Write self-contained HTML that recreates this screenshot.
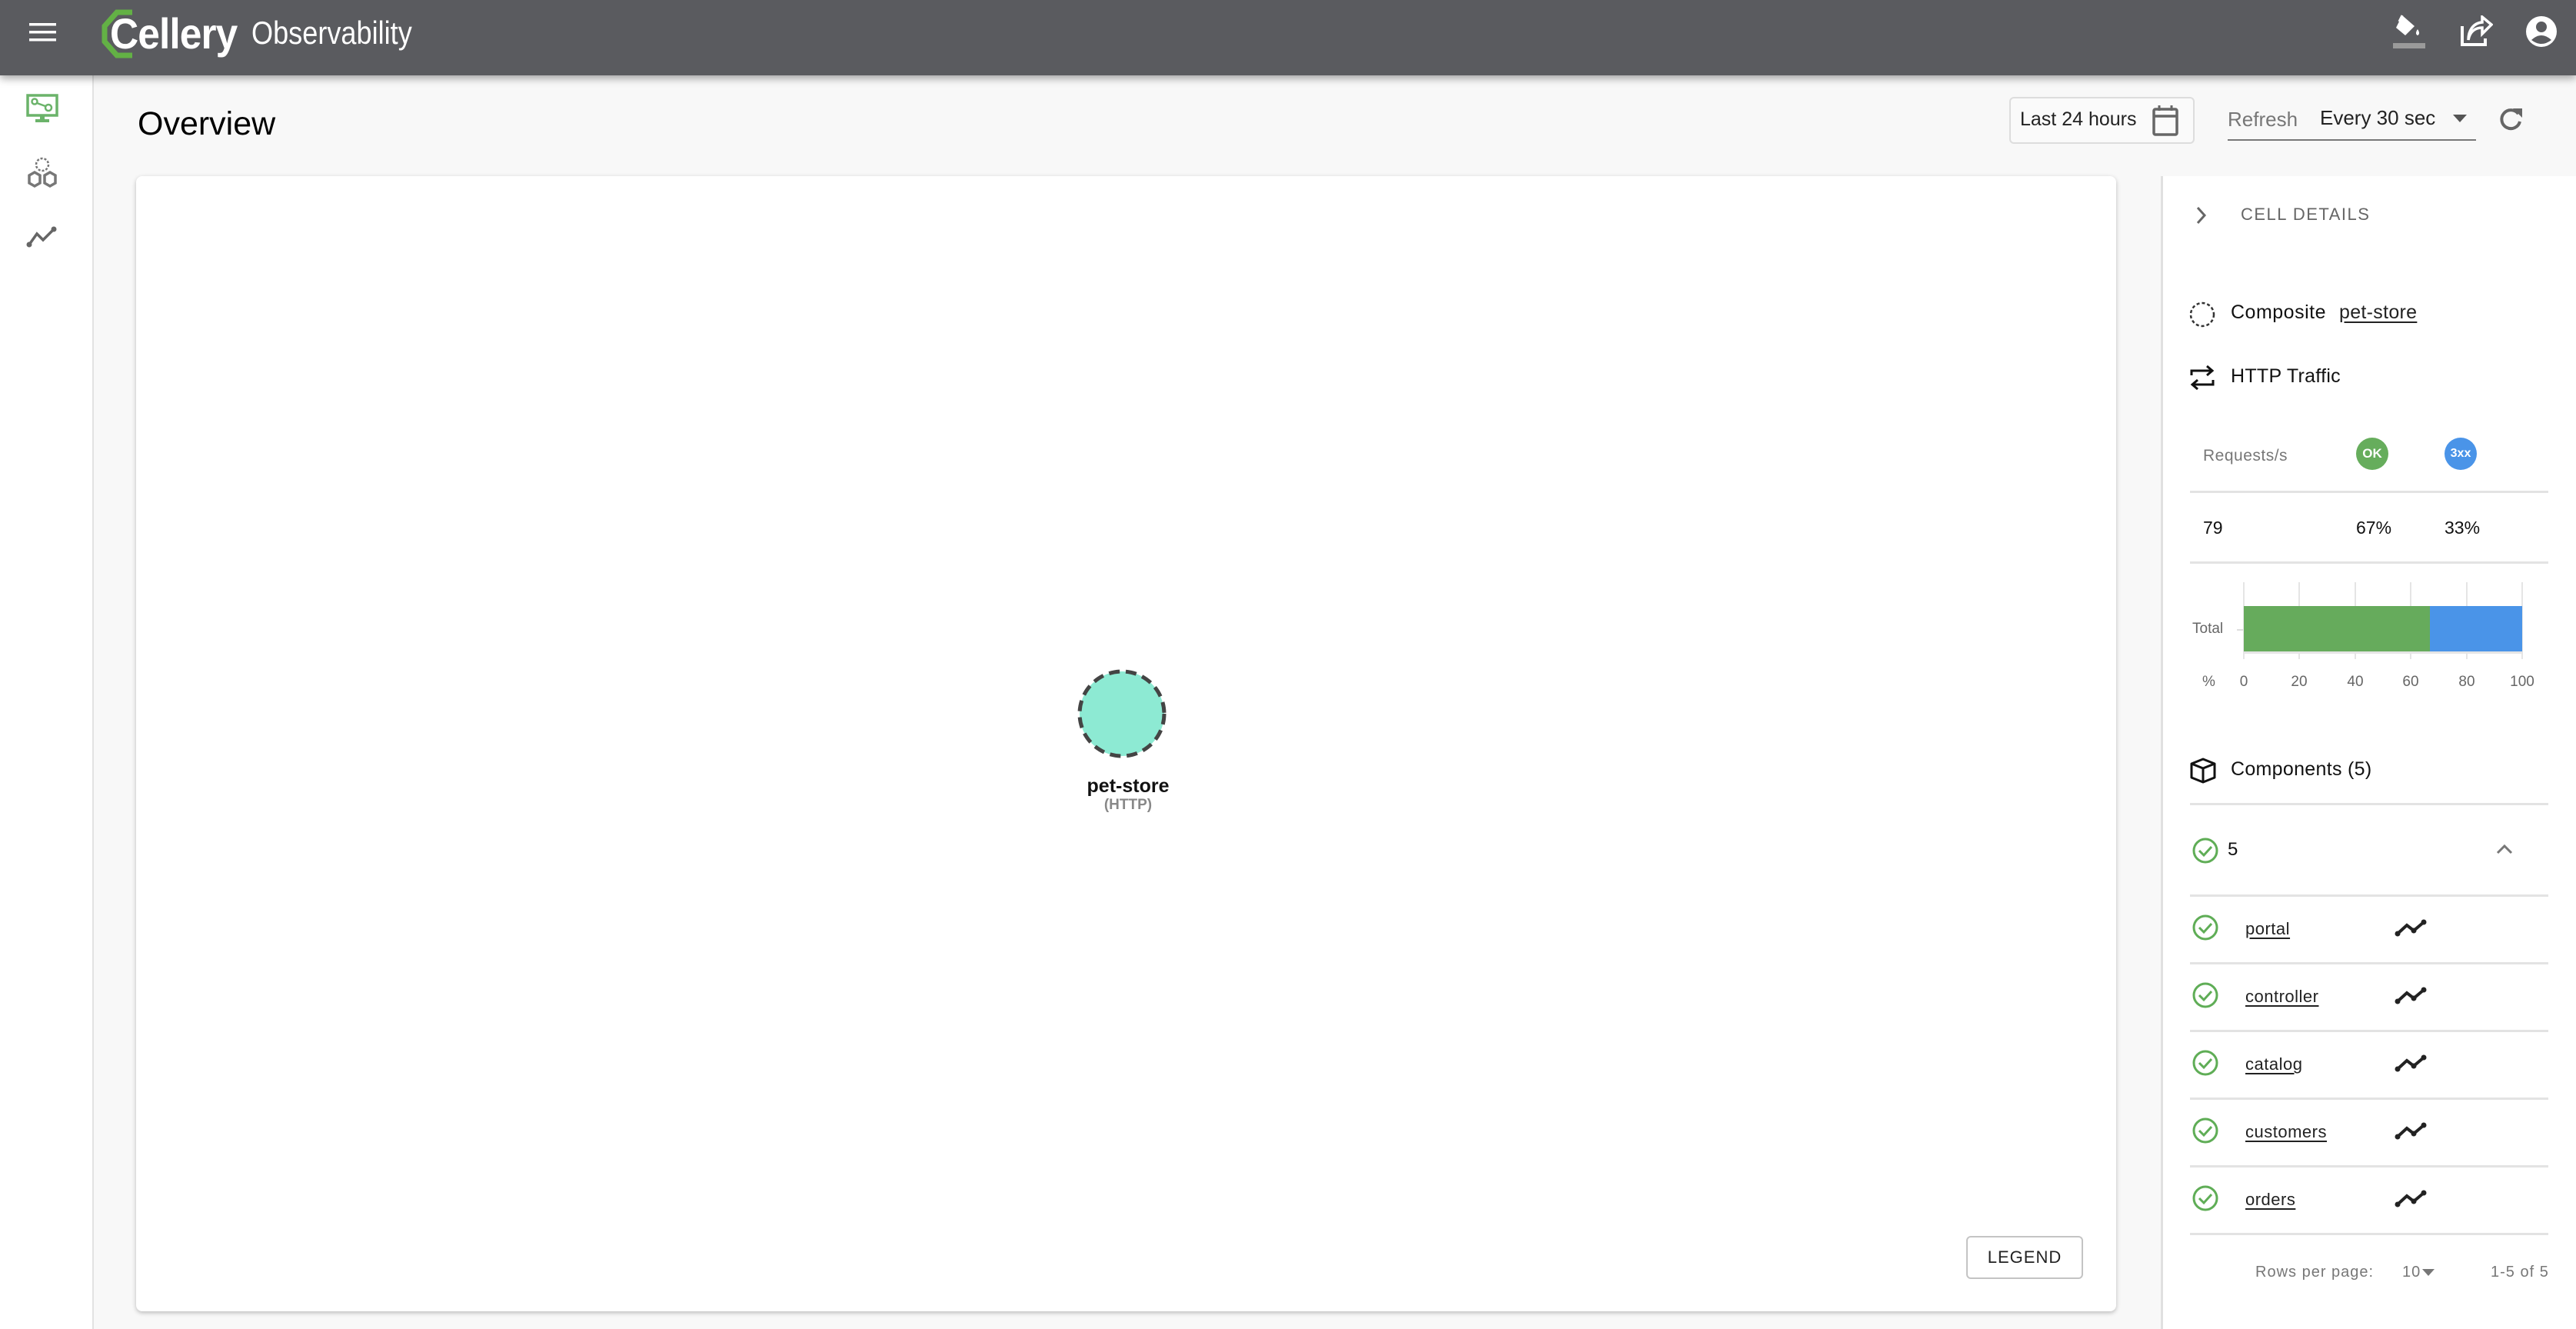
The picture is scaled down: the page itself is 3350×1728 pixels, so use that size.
<!DOCTYPE html>
<html><head><meta charset="utf-8"><style>
*{margin:0;padding:0;box-sizing:border-box}
body{width:3350px;height:1728px;overflow:hidden;background:#f8f8f8;font-family:"Liberation Sans",sans-serif;position:relative;color:#111}
.a{position:absolute}
.hdr{left:0;top:0;width:3350px;height:98px;background:#5a5b5f;box-shadow:0 4px 10px rgba(0,0,0,.35);z-index:5}
.side{left:0;top:98px;width:122px;height:1630px;background:#fff;border-right:2px solid #e2e2e2}
.card{left:177px;top:229px;width:2575px;height:1476px;background:#fff;border-radius:8px;box-shadow:0 2px 6px rgba(0,0,0,.25)}
.panel{left:2810px;top:229px;width:540px;height:1499px;background:#fff;border-left:3px solid #e0e0e0}
.t{white-space:nowrap;line-height:1}
.ln{height:3px;background:#e3e3e3;left:2848px;width:466px}
.u{text-decoration:underline;text-underline-offset:4px}
.g{width:2px;height:100px;background:#e5e5e5;top:757px}
.x{font-size:19px;color:#666;top:877px;width:40px;text-align:center}
</style></head><body>
<div class="a hdr">
  <svg class="a" style="left:38px;top:30px" width="35" height="24" viewBox="0 0 35 24"><rect y="0" width="35" height="3.5" fill="#fff"/><rect y="10" width="35" height="3.5" fill="#fff"/><rect y="20" width="35" height="3.5" fill="#fff"/></svg>
  <svg class="a" style="left:132px;top:12px" width="60" height="64" viewBox="0 0 60 64"><path d="M40 4 L20 4 L4 22 L4 42 L20 60 L40 60" fill="none" stroke="#63b145" stroke-width="7"/></svg>
  <div class="a t" style="left:143px;top:16px;font-size:56px;font-weight:bold;color:#fff;letter-spacing:-1px;transform:scaleX(.92);transform-origin:left">Cellery</div>
  <div class="a t" style="left:327px;top:22px;font-size:42px;color:#fff;transform:scaleX(.86);transform-origin:left">Observability</div>
  <svg class="a" style="left:3110px;top:16px" width="46" height="50" viewBox="0 0 46 50"><path d="M14 4 L6 20 L18 30 L30 18 Z" fill="#fff"/><path d="M14 4 L10 12" stroke="#fff" stroke-width="3"/><path d="M34 22 q-4 6 0 8 q4 -2 0 -8z" fill="#fff"/><rect x="2" y="40" width="42" height="7" fill="#9a9a9a"/></svg>
  <svg class="a" style="left:3198px;top:20px" width="44" height="42" viewBox="0 0 44 42"><path d="M4 14 V38 H34 V30" fill="none" stroke="#fff" stroke-width="4"/><path d="M12 32 C14 20 22 16 30 16 V24 L42 12 L30 2 V9 C18 10 12 20 12 32Z" fill="none" stroke="#fff" stroke-width="3.5"/></svg>
  <svg class="a" style="left:3284px;top:20px" width="42" height="42" viewBox="0 0 42 42"><circle cx="21" cy="21" r="20" fill="#fff"/><circle cx="21" cy="15" r="7" fill="#5a5b5f"/><path d="M8 32 Q21 20 34 32 Q21 42 8 32Z" fill="#5a5b5f"/></svg>
</div>
<div class="a side">
  <svg class="a" style="left:34px;top:24px" width="42" height="38" viewBox="0 0 42 38"><rect x="2" y="2" width="38" height="26" fill="none" stroke="#6bb36a" stroke-width="3.5"/><rect x="18" y="28" width="6" height="5" fill="#6bb36a"/><rect x="12" y="33" width="18" height="4" fill="#6bb36a"/><circle cx="11" cy="10" r="3.5" fill="none" stroke="#6bb36a" stroke-width="2.5"/><circle cx="29" cy="18" r="4" fill="none" stroke="#6bb36a" stroke-width="2.5"/><path d="M14 12 L25 16" stroke="#6bb36a" stroke-width="2.5"/></svg>
  <svg class="a" style="left:34px;top:106px" width="42" height="42" viewBox="0 0 42 42"><circle cx="21" cy="10" r="8" fill="none" stroke="#777" stroke-width="2.5" stroke-dasharray="3 2"/><path d="M11 20 L18 24 L18 34 L11 38 L4 34 L4 24Z M31 20 L38 24 L38 34 L31 38 L24 34 L24 24Z" fill="none" stroke="#777" stroke-width="3.5"/></svg>
  <svg class="a" style="left:34px;top:196px" width="42" height="28" viewBox="0 0 42 28"><path d="M4 24 L14 10 L22 18 L36 4" fill="none" stroke="#666" stroke-width="3.5"/><circle cx="4" cy="24" r="3.5" fill="#666"/><circle cx="36" cy="4" r="3.5" fill="#666"/></svg>
</div>
<div class="a t" style="left:179px;top:140px;font-size:43px;color:#000">Overview</div>
<div class="a" style="left:2613px;top:126px;width:241px;height:61px;border:2px solid #ddd;border-radius:6px;background:#fafafa"></div>
<div class="a t" style="left:2627px;top:143px;font-size:25px;color:#222">Last 24 hours</div>
<svg class="a" style="left:2798px;top:136px" width="36" height="42" viewBox="0 0 36 42"><rect x="3" y="6" width="30" height="33" rx="2" fill="none" stroke="#666" stroke-width="3.5"/><path d="M3 15 H33" stroke="#666" stroke-width="3.5"/><path d="M10 1 V8 M26 1 V8" stroke="#666" stroke-width="3"/></svg>
<div class="a t" style="left:2897px;top:142px;font-size:26px;color:#777">Refresh</div>
<div class="a t" style="left:3017px;top:140px;font-size:26px;color:#222">Every 30 sec</div>
<svg class="a" style="left:3190px;top:149px" width="18" height="10"><path d="M0 0 H18 L9 10Z" fill="#555"/></svg>
<div class="a" style="left:2897px;top:181px;width:323px;height:2px;background:#777"></div>
<svg class="a" style="left:3248px;top:138px" width="34" height="34" viewBox="0 0 34 34"><path d="M27 10 A12 12 0 1 0 29 20" fill="none" stroke="#666" stroke-width="4"/><path d="M20 3 L32 3 L32 15Z" fill="#666"/></svg>
<div class="a card"></div>
<svg class="a" style="left:1400px;top:869px" width="118" height="118" viewBox="0 0 118 118"><circle cx="59" cy="59" r="55" fill="#8dead3" stroke="#444" stroke-width="5" stroke-dasharray="14 8"/></svg>
<div class="a t" style="left:1359px;top:1010px;width:216px;text-align:center;font-size:25px;font-weight:bold;color:#111">pet-store</div>
<div class="a t" style="left:1359px;top:1037px;width:216px;text-align:center;font-size:19px;font-weight:bold;color:#888">(HTTP)</div>
<div class="a" style="left:2557px;top:1607px;width:152px;height:56px;border:2px solid #c4c4c4;border-radius:6px;background:#fff"></div>
<div class="a t" style="left:2557px;top:1624px;width:152px;text-align:center;font-size:22px;color:#222;letter-spacing:1px">LEGEND</div>
<div class="a panel"></div>
<svg class="a" style="left:2856px;top:268px" width="14" height="24"><path d="M2 2 L11 12 L2 22" fill="none" stroke="#666" stroke-width="3"/></svg>
<div class="a t" style="left:2914px;top:268px;font-size:22px;color:#666;letter-spacing:1.5px">CELL DETAILS</div>
<svg class="a" style="left:2846px;top:391px" width="36" height="36"><circle cx="18" cy="18" r="15" fill="none" stroke="#333" stroke-width="2.5" stroke-dasharray="4 3"/></svg>
<div class="a t" style="left:2901px;top:394px;font-size:25px;letter-spacing:.5px">Composite</div>
<div class="a t u" style="left:3042px;top:394px;font-size:25px;letter-spacing:.3px;color:#222">pet-store</div>
<svg class="a" style="left:2848px;top:474px" width="32" height="34" viewBox="0 0 32 34"><path d="M2 14 V8 H28 M22 2 L29 8 L22 14" fill="none" stroke="#111" stroke-width="3"/><path d="M30 20 V26 H4 M10 20 L3 26 L10 32" fill="none" stroke="#111" stroke-width="3"/></svg>
<div class="a t" style="left:2901px;top:477px;font-size:25px;letter-spacing:.3px">HTTP Traffic</div>
<div class="a t" style="left:2865px;top:582px;font-size:21px;color:#777;letter-spacing:.5px">Requests/s</div>
<div class="a" style="left:3064px;top:569px;width:42px;height:42px;border-radius:50%;background:#66ad5c;color:#fff;font-size:17px;font-weight:bold;text-align:center;line-height:42px">OK</div>
<div class="a" style="left:3179px;top:569px;width:42px;height:42px;border-radius:50%;background:#4a94e8;color:#fff;font-size:16px;font-weight:bold;text-align:center;line-height:42px">3xx</div>
<div class="a ln" style="top:638px"></div>
<div class="a t" style="left:2865px;top:675px;font-size:23px">79</div>
<div class="a t" style="left:3064px;top:675px;font-size:23px">67%</div>
<div class="a t" style="left:3179px;top:675px;font-size:23px">33%</div>
<div class="a ln" style="top:730px"></div>
<div class="a g" style="left:2917px"></div>
<div class="a g" style="left:2989px"></div>
<div class="a g" style="left:3062px"></div>
<div class="a g" style="left:3134px"></div>
<div class="a g" style="left:3207px"></div>
<div class="a g" style="left:3279px"></div>
<div class="a" style="left:2909px;top:818px;width:8px;height:2px;background:#ddd"></div>
<div class="a" style="left:2917px;top:847px;width:364px;height:3px;background:#e5e5e5"></div>
<div class="a" style="left:2918px;top:788px;width:242px;height:59px;background:#66ab5c"></div>
<div class="a" style="left:3160px;top:788px;width:120px;height:59px;background:#4a94e8"></div>
<div class="a t" style="left:2851px;top:808px;font-size:19px;color:#666">Total</div>
<div class="a t" style="left:2864px;top:877px;font-size:19px;color:#666">%</div>
<div class="a t x" style="left:2898px">0</div>
<div class="a t x" style="left:2970px">20</div>
<div class="a t x" style="left:3043px">40</div>
<div class="a t x" style="left:3115px">60</div>
<div class="a t x" style="left:3188px">80</div>
<div class="a t x" style="left:3260px">100</div>
<svg class="a" style="left:2848px;top:985px" width="34" height="34" viewBox="0 0 34 34"><path d="M17 2 L32 8 L32 26 L17 32 L2 26 L2 8Z M2 8 L17 14 L32 8 M17 14 V32" fill="none" stroke="#111" stroke-width="3" stroke-linejoin="round"/></svg>
<div class="a t" style="left:2901px;top:988px;font-size:25px;letter-spacing:.3px">Components (5)</div>
<div class="a ln" style="top:1044px"></div>
<svg class="a" style="left:2850px;top:1088px" width="36" height="36"><circle cx="18" cy="18" r="15" fill="none" stroke="#5fad56" stroke-width="3"/><path d="M10 18 L16 24 L26 13" fill="none" stroke="#5fad56" stroke-width="3"/></svg>
<div class="a t" style="left:2897px;top:1093px;font-size:24px">5</div>
<svg class="a" style="left:3246px;top:1097px" width="22" height="14"><path d="M2 12 L11 3 L20 12" fill="none" stroke="#777" stroke-width="3"/></svg>
<div class="a ln" style="top:1163px"></div>
<svg class="a" style="left:2850px;top:1188px" width="36" height="36"><circle cx="18" cy="18" r="15" fill="none" stroke="#5fad56" stroke-width="3"/><path d="M10 18 L16 24 L26 13" fill="none" stroke="#5fad56" stroke-width="3"/></svg>
<div class="a t u" style="left:2920px;top:1197px;font-size:22px;letter-spacing:.5px;color:#222">portal</div>
<svg class="a" style="left:3114px;top:1194px" width="42" height="24" viewBox="0 0 42 24"><path d="M4 20 L16 9 L25 16 L38 5" fill="none" stroke="#222" stroke-width="4"/><circle cx="4" cy="20" r="3.5" fill="#222"/><circle cx="25" cy="16" r="3.5" fill="#222"/><circle cx="38" cy="5" r="3.5" fill="#222"/></svg>
<div class="a ln" style="top:1251px"></div>
<svg class="a" style="left:2850px;top:1276px" width="36" height="36"><circle cx="18" cy="18" r="15" fill="none" stroke="#5fad56" stroke-width="3"/><path d="M10 18 L16 24 L26 13" fill="none" stroke="#5fad56" stroke-width="3"/></svg>
<div class="a t u" style="left:2920px;top:1285px;font-size:22px;letter-spacing:.5px;color:#222">controller</div>
<svg class="a" style="left:3114px;top:1282px" width="42" height="24" viewBox="0 0 42 24"><path d="M4 20 L16 9 L25 16 L38 5" fill="none" stroke="#222" stroke-width="4"/><circle cx="4" cy="20" r="3.5" fill="#222"/><circle cx="25" cy="16" r="3.5" fill="#222"/><circle cx="38" cy="5" r="3.5" fill="#222"/></svg>
<div class="a ln" style="top:1339px"></div>
<svg class="a" style="left:2850px;top:1364px" width="36" height="36"><circle cx="18" cy="18" r="15" fill="none" stroke="#5fad56" stroke-width="3"/><path d="M10 18 L16 24 L26 13" fill="none" stroke="#5fad56" stroke-width="3"/></svg>
<div class="a t u" style="left:2920px;top:1373px;font-size:22px;letter-spacing:.5px;color:#222">catalog</div>
<svg class="a" style="left:3114px;top:1370px" width="42" height="24" viewBox="0 0 42 24"><path d="M4 20 L16 9 L25 16 L38 5" fill="none" stroke="#222" stroke-width="4"/><circle cx="4" cy="20" r="3.5" fill="#222"/><circle cx="25" cy="16" r="3.5" fill="#222"/><circle cx="38" cy="5" r="3.5" fill="#222"/></svg>
<div class="a ln" style="top:1427px"></div>
<svg class="a" style="left:2850px;top:1452px" width="36" height="36"><circle cx="18" cy="18" r="15" fill="none" stroke="#5fad56" stroke-width="3"/><path d="M10 18 L16 24 L26 13" fill="none" stroke="#5fad56" stroke-width="3"/></svg>
<div class="a t u" style="left:2920px;top:1461px;font-size:22px;letter-spacing:.5px;color:#222">customers</div>
<svg class="a" style="left:3114px;top:1458px" width="42" height="24" viewBox="0 0 42 24"><path d="M4 20 L16 9 L25 16 L38 5" fill="none" stroke="#222" stroke-width="4"/><circle cx="4" cy="20" r="3.5" fill="#222"/><circle cx="25" cy="16" r="3.5" fill="#222"/><circle cx="38" cy="5" r="3.5" fill="#222"/></svg>
<div class="a ln" style="top:1515px"></div>
<svg class="a" style="left:2850px;top:1540px" width="36" height="36"><circle cx="18" cy="18" r="15" fill="none" stroke="#5fad56" stroke-width="3"/><path d="M10 18 L16 24 L26 13" fill="none" stroke="#5fad56" stroke-width="3"/></svg>
<div class="a t u" style="left:2920px;top:1549px;font-size:22px;letter-spacing:.5px;color:#222">orders</div>
<svg class="a" style="left:3114px;top:1546px" width="42" height="24" viewBox="0 0 42 24"><path d="M4 20 L16 9 L25 16 L38 5" fill="none" stroke="#222" stroke-width="4"/><circle cx="4" cy="20" r="3.5" fill="#222"/><circle cx="25" cy="16" r="3.5" fill="#222"/><circle cx="38" cy="5" r="3.5" fill="#222"/></svg>
<div class="a ln" style="top:1603px"></div>
<div class="a t" style="left:2933px;top:1644px;font-size:20px;color:#777;letter-spacing:1px">Rows per page:</div>
<div class="a t" style="left:3124px;top:1644px;font-size:20px;color:#777;letter-spacing:1px">10</div>
<svg class="a" style="left:3150px;top:1650px" width="16" height="9"><path d="M0 0 H16 L8 9Z" fill="#777"/></svg>
<div class="a t" style="left:3239px;top:1644px;font-size:20px;color:#777;letter-spacing:1px">1-5 of 5</div>
</body></html>
